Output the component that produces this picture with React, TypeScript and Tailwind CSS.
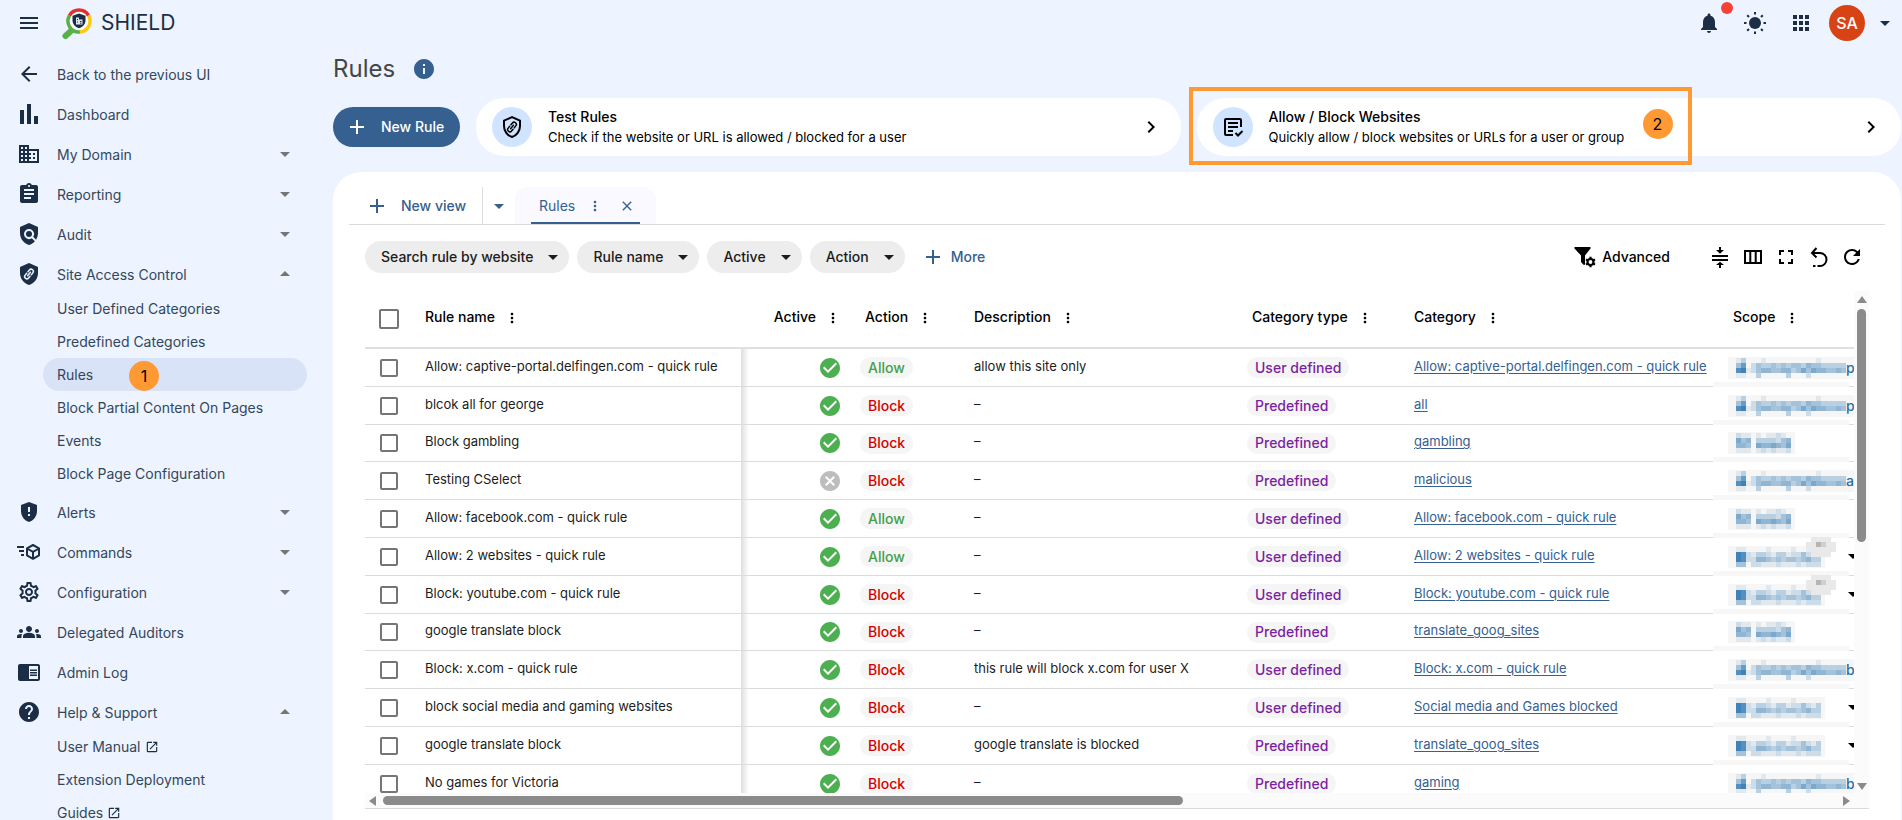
import type { ReactNode } from 'react';
import {
  MdAdd,
  MdApps,
  MdArrowBack,
  MdArrowDropDown,
  MdArrowDropUp,
  MdAssignment,
  MdBusiness,
  MdCancel,
  MdCheckCircle,
  MdChevronRight,
  MdChromeReaderMode,
  MdClose,
  MdFullscreen,
  MdGppMaybe,
  MdGroups,
  MdHelp,
  MdInfo,
  MdMenu,
  MdMoreVert,
  MdNotifications,
  MdOpenInNew,
  MdOutlineSettings,
  MdPolicy,
  MdRefresh,
} from 'react-icons/md';
import { clsx } from 'clsx';

interface SubItem {
  label: string;
  active?: boolean;
  external?: boolean;
}

interface NavItem {
  label: string;
  icon: ReactNode;
  expandable?: boolean;
  children?: SubItem[];
}

interface Rule {
  name: string;
  active: boolean;
  action: 'Allow' | 'Block';
  description?: string;
  type: 'User defined' | 'Predefined';
  category: string;
  scope: 'user' | 'all' | 'group';
  tail?: string;
  counter?: boolean;
}

const SHIELD = 'M12 1 3 5v6c0 5.55 3.84 10.74 9 12 5.16-1.26 9-6.45 9-12V5l-9-4Z';

function LinkGlyph({ className }: { className: string }) {
  return (
    <g transform="rotate(-50 12 12)" fill="none" strokeWidth="1.5" strokeLinecap="round" className={className}>
      <path d="M11 9.8H8.7a2.2 2.2 0 0 0 0 4.4H11" />
      <path d="M13 9.8h2.3a2.2 2.2 0 0 1 0 4.4H13" />
      <path d="M9.8 12h4.4" />
    </g>
  );
}

function BarsIcon() {
  return (
    <svg viewBox="0 0 24 24" className="h-6 w-6" fill="currentColor">
      <path d="M3 8h4v14H3zM10 2h4v20h-4zM17 14h4v8h-4z" />
    </svg>
  );
}

function ShieldLinkIcon() {
  return (
    <svg viewBox="0 0 24 24" className="h-6 w-6" fill="currentColor">
      <path d={SHIELD} />
      <LinkGlyph className="stroke-[#edf3ff]" />
    </svg>
  );
}

function ShieldLinkOutlineIcon() {
  return (
    <svg viewBox="0 0 24 24" className="h-6 w-6" fill="none">
      <path d="M12 2.1 4 5.7V11c0 5 3.4 9.7 8 11 4.6-1.3 8-6 8-11V5.7L12 2.1Z" stroke="black" strokeWidth="2" />
      <LinkGlyph className="stroke-black" />
    </svg>
  );
}

function FastCubeIcon() {
  return (
    <svg viewBox="0 0 24 24" className="h-6 w-6" fill="none" stroke="currentColor" strokeWidth="2">
      <path d="M0 7h7M2 11h5M4 15h3" />
      <path d="m16 5 6 3.300v7L16 18.800l-6-3.500v-7L16 5Z" strokeLinejoin="round" />
      <path d="m10 8.500 6 3.400 6-3.400M16 12v6.500" />
    </svg>
  );
}

function SunIcon() {
  return (
    <svg viewBox="0 0 24 24" className="h-6 w-6" fill="currentColor">
      <circle cx="12" cy="12" r="6" />
      <path
        d="M12 1v2.500M12 20.500V23M1 12h2.500M20.500 12H23M4.200 4.200 6 6M18 18l1.800 1.800M4.200 19.800 6 18M18 6l1.800-1.800"
        stroke="currentColor"
        strokeWidth="2"
      />
    </svg>
  );
}

function ListCheckIcon() {
  return (
    <svg viewBox="0 0 24 24" className="h-6 w-6" fill="none" stroke="black" strokeWidth="2">
      <path d="M20 12V5a1 1 0 0 0-1-1H5a1 1 0 0 0-1 1v14a1 1 0 0 0 1 1h7" />
      <path d="M7 8h10M7 12h10M7 16h5M14.500 18l2.500 2.500 4.500-4.500" />
    </svg>
  );
}

function FilterCogIcon() {
  return (
    <svg viewBox="0 0 24 24" className="h-6 w-6">
      <path d="M2.200 2h14.600c.8 0 1.200.8.700 1.500L12 10.500V19c0 .8-.8 1.200-1.400.7l-2.200-2.200a1 1 0 0 1-.4-.8v-6.200L1.500 3.500C1 2.800 1.400 2 2.200 2Z" />
      <circle cx="17.500" cy="17" r="3" fill="none" stroke="black" strokeWidth="2.200" />
      <path
        d="M17.500 11.800v2M17.500 20.200v2M13 14.400l1.700 1M20.300 18.600l1.700 1M13 19.600l1.700-1M20.300 15.400l1.700-1"
        stroke="black"
        strokeWidth="2.200"
      />
    </svg>
  );
}

function CollapseRowsIcon() {
  return (
    <svg viewBox="0 0 24 24" className="h-6 w-6" fill="black">
      <path d="M4 10h16v2H4zM4 14h16v2H4zM11 2h2v3h3l-4 3.800L8 5h3zM11 23h2v-3h3l-4-3.300L8 20h3z" />
    </svg>
  );
}

function ColumnsIcon() {
  return (
    <svg viewBox="0 0 24 24" className="h-6 w-6" fill="none" stroke="black" strokeWidth="2">
      <path d="M4 6h16v12H4zM9.300 6v12M14.700 6v12" />
    </svg>
  );
}

function ResetIcon() {
  return (
    <svg viewBox="0 0 24 24" className="h-6 w-6" fill="none" stroke="black" strokeWidth="2">
      <path d="M9.500 3 5 8l4.500 4.500M5.500 8H13a6.200 6.200 0 0 1 0 13h-2.500" />
      <path d="M6 21h2.500" />
    </svg>
  );
}

function Logo() {
  return (
    <svg viewBox="0 0 32 34" className="h-[34px] w-8" fill="none">
      <path d="m11 24-6.500 6" stroke="#56b146" strokeWidth="6" strokeLinecap="round" />
      <circle cx="18" cy="15" r="10" fill="white" />
      <path d="M19 26A11 11 0 0 1 8.500 9.500" stroke="#56b146" strokeWidth="3.500" />
      <path d="M8.500 9.500a11 11 0 0 1 19 0" stroke="#e2312d" strokeWidth="3.500" />
      <path d="M27.500 9.500A11 11 0 0 1 19 26" stroke="#fccb0f" strokeWidth="3.500" />
      <path d="m18 7.500-6.500 2.300v4.400c0 4 2.700 6.600 6.500 8 3.800-1.400 6.500-4 6.500-8V9.800L18 7.500Z" fill="#1b2e45" />
      <path d="M15 11.500h3v2h3.500v5H15z" fill="#dfe6ef" />
      <path d="M16 13.500h1M16 16h1M19 15.500h1.500M19 17.200h1.500" stroke="#1b2e45" strokeWidth="1" />
    </svg>
  );
}

const NAV: NavItem[] = [
  { label: 'Back to the previous UI', icon: <MdArrowBack /> },
  { label: 'Dashboard', icon: <BarsIcon /> },
  { label: 'My Domain', icon: <MdBusiness />, expandable: true },
  { label: 'Reporting', icon: <MdAssignment />, expandable: true },
  { label: 'Audit', icon: <MdPolicy />, expandable: true },
  {
    label: 'Site Access Control',
    icon: <ShieldLinkIcon />,
    expandable: true,
    children: [
      { label: 'User Defined Categories' },
      { label: 'Predefined Categories' },
      { label: 'Rules', active: true },
      { label: 'Block Partial Content On Pages' },
      { label: 'Events' },
      { label: 'Block Page Configuration' },
    ],
  },
  { label: 'Alerts', icon: <MdGppMaybe />, expandable: true },
  { label: 'Commands', icon: <FastCubeIcon />, expandable: true },
  { label: 'Configuration', icon: <MdOutlineSettings />, expandable: true },
  { label: 'Delegated Auditors', icon: <MdGroups /> },
  { label: 'Admin Log', icon: <MdChromeReaderMode /> },
  {
    label: 'Help & Support',
    icon: <MdHelp />,
    expandable: true,
    children: [
      { label: 'User Manual', external: true },
      { label: 'Extension Deployment' },
      { label: 'Guides', external: true },
    ],
  },
];

const RULES: Rule[] = [
  { name: 'Allow: captive-portal.delfingen.com - quick rule', active: true, action: 'Allow', description: 'allow this site only', type: 'User defined', category: 'Allow: captive-portal.delfingen.com - quick rule', scope: 'user', tail: 'p' },
  { name: 'blcok all for george', active: true, action: 'Block', type: 'Predefined', category: 'all', scope: 'user', tail: 'p' },
  { name: 'Block gambling', active: true, action: 'Block', type: 'Predefined', category: 'gambling', scope: 'all' },
  { name: 'Testing CSelect', active: false, action: 'Block', type: 'Predefined', category: 'malicious', scope: 'user', tail: 'a' },
  { name: 'Allow: facebook.com - quick rule', active: true, action: 'Allow', type: 'User defined', category: 'Allow: facebook.com - quick rule', scope: 'all' },
  { name: 'Allow: 2 websites - quick rule', active: true, action: 'Allow', type: 'User defined', category: 'Allow: 2 websites - quick rule', scope: 'group', counter: true },
  { name: 'Block: youtube.com - quick rule', active: true, action: 'Block', type: 'User defined', category: 'Block: youtube.com - quick rule', scope: 'group', counter: true },
  { name: 'google translate block', active: true, action: 'Block', type: 'Predefined', category: 'translate_goog_sites', scope: 'all' },
  { name: 'Block: x.com - quick rule', active: true, action: 'Block', description: 'this rule will block x.com for user X', type: 'User defined', category: 'Block: x.com - quick rule', scope: 'user', tail: 'b' },
  { name: 'block social media and gaming websites', active: true, action: 'Block', type: 'User defined', category: 'Social media and Games blocked', scope: 'group' },
  { name: 'google translate block', active: true, action: 'Block', description: 'google translate is blocked', type: 'Predefined', category: 'translate_goog_sites', scope: 'group' },
  { name: 'No games for Victoria', active: true, action: 'Block', type: 'Predefined', category: 'gaming', scope: 'user', tail: 'b' },
];

// each digit is the strength of one 5px block
const MOSAICS: Record<Rule['scope'], string[]> = {
  user: ['13...1..........1.....', '47.2433434344354433333', '89124554455346465544543', '11..3.....3...2.......'],
  all: ['211.1.1121.', '645.3333245', '554.6556546', '111.1212112'],
  group: ['11....1....1......', '98213321331224213', '98225543434434533', '44.22111211121222'],
};

const COLUMNS = [
  { label: 'Rule name', width: 'w-[328px]' },
  { label: 'Active', width: 'w-[112px]' },
  { label: 'Action', width: 'w-[109px]' },
  { label: 'Description', width: 'w-[278px]' },
  { label: 'Category type', width: 'w-[162px]' },
  { label: 'Category', width: 'w-[319px]' },
  { label: 'Scope', width: 'w-auto' },
];

function Mosaic({ scope }: { scope: Rule['scope'] }) {
  const rows = MOSAICS[scope];
  const width = rows[1].length * 5;
  return (
    <svg width={width} height={20} viewBox={`0 0 ${width} 20`} shapeRendering="crispEdges" className="shrink-0">
      {rows.flatMap((row, y) =>
        row.split('').map((cell, x) =>
          cell === '.' ? null : (
            <rect key={`${x}-${y}`} x={x * 5} y={y * 5} width={5} height={5} fill="#2a76b2" opacity={Number(cell) / 10} />
          )
        )
      )}
    </svg>
  );
}

function ScopeCell({ rule }: { rule: Rule }) {
  return (
    <>
      <div className="absolute -bottom-px -left-2 h-[5px] w-[136px] bg-[#f7f7f7]" />
      <div className="-ml-2 flex w-max items-center bg-[#f6f6f6] py-px pl-2 text-sm font-medium text-[#2a6ea5]">
        <Mosaic scope={rule.scope} />
        {rule.tail ? <span>{rule.tail}</span> : <span className="w-1" />}
      </div>
      {rule.counter && (
        <svg width={30} height={20} viewBox="0 0 30 20" className="absolute -top-px left-[85px]" shapeRendering="crispEdges">
          <path d="M5 0h20v5h5v10h-5v5H5v-5H0V5h5z" fill="#e9e9e9" />
          <path d="M10 5h10v5H10z" fill="#cfcfcf" />
          <path d="M10 5h5v5h-5z" fill="#b5b5b5" />
        </svg>
      )}
      {rule.scope === 'group' && <MdArrowDropDown className="absolute top-[6px] left-[120px] h-6 w-6 text-black" />}
    </>
  );
}

function Header() {
  return (
    <header className="flex h-[46px] shrink-0 items-center pr-[5px] pl-[17px] text-[#1b2e45]">
      <button type="button" aria-label="Menu">
        <MdMenu className="h-6 w-6" />
      </button>
      <a href="#" className="ml-5 flex items-center gap-2 text-[21px]">
        <Logo />
        SHIELD
      </a>
      <div className="ml-auto flex items-center">
        <button type="button" aria-label="Notifications" className="relative mr-[22px]">
          <MdNotifications className="h-6 w-6" />
          <span className="absolute -top-[9px] left-6 h-3 w-3 rounded-full bg-[#f44336]" />
        </button>
        <button type="button" aria-label="Theme" className="mr-[22px]">
          <SunIcon />
        </button>
        <button type="button" aria-label="Apps" className="mr-4">
          <MdApps className="h-6 w-6" />
        </button>
        <button type="button" className="flex items-center gap-2">
          <span className="flex h-9 w-9 items-center justify-center rounded-full bg-[#d84315] text-base font-medium text-white">
            SA
          </span>
          <MdArrowDropDown className="h-6 w-6" />
        </button>
      </div>
    </header>
  );
}

function Sidebar() {
  return (
    <aside className="w-[333px] shrink-0 pt-[6px] pr-[26px] text-sm text-[#33475b]">
      <nav>
        {NAV.map((item) => (
          <div key={item.label} className="mt-1">
            <a href="#" className="flex h-9 items-center gap-4 pr-[10px] pl-[17px]">
              <span className="text-2xl text-[#1b2e45]">{item.icon}</span>
              <span className="pt-[2px]">{item.label}</span>
              {item.expandable && (
                <span className="ml-auto text-2xl text-[#757575]">
                  {item.children ? <MdArrowDropUp /> : <MdArrowDropDown />}
                </span>
              )}
            </a>
            {item.children?.map((child) => (
              <a
                key={child.label}
                href="#"
                className={clsx(
                  'relative ml-[43px] flex h-[33px] items-center gap-1 rounded-full pl-[14px]',
                  child.active && 'bg-[#d9e3f8]'
                )}
              >
                {child.label}
                {child.external && <MdOpenInNew className="h-[14px] w-[14px] text-[#1b2e45]" />}
                {child.active && <Marker value={1} className="top-[3px] left-[86px]" />}
              </a>
            ))}
          </div>
        ))}
      </nav>
    </aside>
  );
}

function Marker({ value, className }: { value: number; className: string }) {
  return (
    <span
      className={clsx(
        'absolute flex h-[30px] w-[30px] items-center justify-center rounded-full bg-[#ff9933] text-base text-black',
        className
      )}
    >
      {value}
    </span>
  );
}

function ActionCard({ icon, title, text }: { icon: ReactNode; title: string; text: string }) {
  return (
    <button
      type="button"
      className="flex h-[58px] w-full items-center gap-4 rounded-[28px] bg-white pr-[18px] pl-4 text-left text-black"
    >
      <span className="flex h-10 w-10 items-center justify-center rounded-full bg-[#d1e4ff]">{icon}</span>
      <span className="flex flex-col">
        <span className="text-sm font-medium">{title}</span>
        <span className="text-[13px] leading-5">{text}</span>
      </span>
      <MdChevronRight className="ml-auto h-6 w-6" />
    </button>
  );
}

function ViewTabs() {
  return (
    <div className="mx-4 flex h-[38px] border-b border-[#dcdcdc] text-sm font-medium text-[#35608f]">
      <button type="button" className="flex w-[133px] items-center gap-3 pl-4">
        <MdAdd className="h-6 w-6" />
        New view
      </button>
      <button type="button" aria-label="Views" className="flex w-[33px] items-center justify-center border-l border-[#dcdcdc]">
        <MdArrowDropDown className="h-6 w-6" />
      </button>
      <div className="flex rounded-t-xl bg-[#f9f9ff] px-4">
        <div className="flex items-center border-b-2 border-[#35608f] pt-[2px] pl-2">
          <a href="#" className="font-normal">
            Rules
          </a>
          <button type="button" aria-label="View options" className="ml-3">
            <MdMoreVert className="h-4 w-4" />
          </button>
          <button type="button" aria-label="Close view" className="mr-[5px] ml-4">
            <MdClose className="h-4 w-4" />
          </button>
        </div>
      </div>
    </div>
  );
}

function FilterBar() {
  return (
    <div className="mt-4 mr-[37px] ml-8 flex h-8 items-center gap-2 text-sm font-medium">
      {['Search rule by website', 'Rule name', 'Active', 'Action'].map((label) => (
        <button key={label} type="button" className="flex h-8 items-center gap-2 rounded-full bg-[#ededed] pr-1 pl-4 text-[#1c1c1c]">
          {label}
          <MdArrowDropDown className="h-6 w-6" />
        </button>
      ))}
      <button type="button" className="ml-2 flex items-center gap-[6px] text-[#35608f]">
        <MdAdd className="h-6 w-6" />
        More
      </button>
      <button type="button" className="mr-[30px] ml-auto flex items-center gap-[5px] text-black">
        <FilterCogIcon />
        Advanced
      </button>
      <div className="flex gap-[9px] text-2xl text-black">
        <button type="button" aria-label="Density">
          <CollapseRowsIcon />
        </button>
        <button type="button" aria-label="Columns">
          <ColumnsIcon />
        </button>
        <button type="button" aria-label="Full screen">
          <MdFullscreen />
        </button>
        <button type="button" aria-label="Reset">
          <ResetIcon />
        </button>
        <button type="button" aria-label="Refresh">
          <MdRefresh />
        </button>
      </div>
    </div>
  );
}

function RulesTable() {
  return (
    <table className="w-full table-fixed border-separate border-spacing-0 text-left">
      <colgroup>
        <col className="w-12" />
        {COLUMNS.map((column) => (
          <col key={column.label} className={column.width} />
        ))}
      </colgroup>
      <thead>
        <tr className="h-[58px] text-sm text-black">
          <th className="border-b-2 border-[#e0e0e0] pl-[14px]">
            <input
              type="checkbox"
              aria-label="Select all rules"
              className="block h-5 w-5 appearance-none rounded-[2px] border-2 border-[#757575]"
            />
          </th>
          {COLUMNS.map((column) => (
            <th key={column.label} className="border-b-2 border-[#e0e0e0] px-3 pb-1 font-medium">
              <div className={clsx('flex items-center gap-[9px]', column.label === 'Active' && 'justify-end')}>
                {column.label}
                <button type="button" aria-label={`${column.label} options`} className="pt-[2px]">
                  <MdMoreVert className="h-4 w-4" />
                </button>
              </div>
            </th>
          ))}
        </tr>
      </thead>
      <tbody>
        {RULES.map((rule, index) => (
          <tr
            key={index}
            className="h-[38px] text-[13px] text-[#1c1c1c] nth-[5n+3]:h-[37px] [&>td]:border-b [&>td]:border-[#dcdcdc] [&>td]:pt-0"
          >
            <td className="pb-0 pl-[15px]">
              <input
                type="checkbox"
                aria-label={`Select ${rule.name}`}
                className="block h-[18px] w-[18px] appearance-none rounded-[2px] border-2 border-[#757575]"
              />
            </td>
            <td className="truncate px-3 pb-[2px]">{rule.name}</td>
            <td className="bg-[linear-gradient(to_right,#dedede,#ffffff)] bg-[length:8px_100%] bg-no-repeat pr-[11px] pb-0">
              {rule.active ? (
                <MdCheckCircle className="ml-auto h-6 w-6 text-[#4caf50]" />
              ) : (
                <MdCancel className="ml-auto h-6 w-6 text-[#bdbdbd]" />
              )}
            </td>
            <td className="px-[7px] pb-0">
              <span
                className={clsx(
                  'flex h-[21px] w-max items-center rounded-full bg-[#f5f5f5] px-2 text-sm font-medium',
                  rule.action === 'Allow' ? 'text-[#43a047]' : 'text-[#d50000]'
                )}
              >
                {rule.action}
              </span>
            </td>
            <td className="truncate px-3 pb-[2px]">{rule.description ?? '–'}</td>
            <td className="px-[7px] pb-0">
              <span className="flex h-[21px] w-max items-center rounded-full bg-[#f5f5f5] px-2 text-sm font-medium text-[#7b1fa2]">
                {rule.type}
              </span>
            </td>
            <td className="truncate px-3 pb-[2px]">
              <a href="#" className="text-[#35608f] underline underline-offset-2">
                {rule.category}
              </a>
            </td>
            <td className="relative pb-0 pl-[15px]">
              <ScopeCell rule={rule} />
            </td>
          </tr>
        ))}
      </tbody>
    </table>
  );
}

function Arrow({ d }: { d: string }) {
  return (
    <svg viewBox="0 0 10 10" className="h-[10px] w-[10px] shrink-0" fill="#8b8b8b">
      <path d={d} />
    </svg>
  );
}

function TableArea() {
  return (
    <div className="mt-[18px] mr-8 ml-8 border-b border-[#dcdcdc]">
      <div className="flex h-[502px]">
        <div className="min-w-0 flex-1 overflow-hidden">
          <RulesTable />
        </div>
        <div className="flex w-[15px] shrink-0 flex-col items-center bg-[#fbfbfb] pt-1">
          <Arrow d="M5 1 10 8H0z" />
          <div className="mt-1 h-[233px] w-[9px] rounded-full bg-[#8b8b8b]" />
          <span className="mt-auto pb-[2px]">
            <Arrow d="M5 9 10 2H0z" />
          </span>
        </div>
      </div>
      <div className="flex h-[15px] items-center bg-[#fbfbfb] pr-[18px] pl-1">
        <Arrow d="M0 5 7 0v10z" />
        <div className="ml-1 h-[9px] w-[54%] rounded-full bg-[#8b8b8b]" />
        <span className="ml-auto">
          <Arrow d="M9 5 2 0v10z" />
        </span>
      </div>
    </div>
  );
}

export default function App() {
  return (
    <div className="flex h-screen flex-col overflow-hidden bg-[#edf3ff] font-['Inter',sans-serif]">
      <Header />
      <div className="flex min-h-0 flex-1">
        <Sidebar />
        <main className="flex min-w-0 flex-1 flex-col pt-[7px] pr-px">
          <div className="flex h-8 items-center gap-[17px] text-2xl text-[#444746]">
            <h1>Rules</h1>
            <button type="button" aria-label="About rules" className="text-[#35608f]">
              <MdInfo />
            </button>
          </div>
          <div className="mt-[13px] flex items-center gap-4">
            <button
              type="button"
              className="flex h-10 w-[127px] shrink-0 items-center gap-3 rounded-full bg-[#35608f] pl-3 text-sm font-medium text-white"
            >
              <MdAdd className="h-6 w-6" />
              New Rule
            </button>
            <div className="flex-1">
              <ActionCard
                icon={<ShieldLinkOutlineIcon />}
                title="Test Rules"
                text="Check if the website or URL is allowed / blocked for a user"
              />
            </div>
            <div className="relative flex-1">
              <ActionCard
                icon={<ListCheckIcon />}
                title="Allow / Block Websites"
                text="Quickly allow / block websites or URLs for a user or group"
              />
              <div className="pointer-events-none absolute -top-[11px] -left-2 h-[78px] w-[503px] border-4 border-[#ff9933]">
                <Marker value={2} className="top-[18px] left-[450px]" />
              </div>
            </div>
          </div>
          <section className="mt-4 flex-1 rounded-t-[28px] bg-white pt-[15px]">
            <ViewTabs />
            <FilterBar />
            <TableArea />
          </section>
        </main>
      </div>
    </div>
  );
}
